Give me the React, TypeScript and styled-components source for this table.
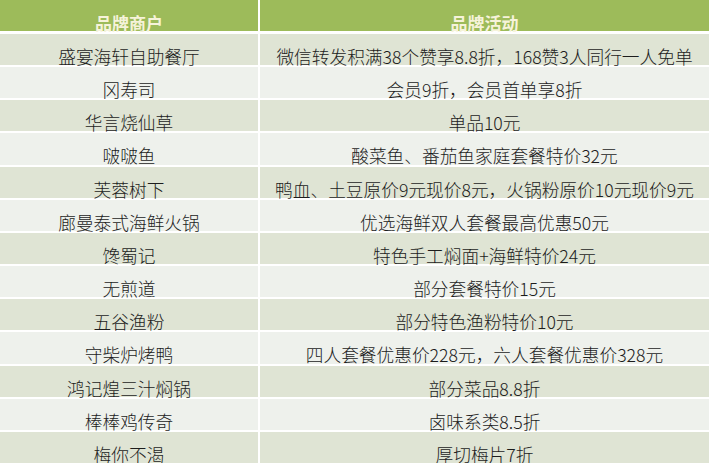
import React from 'react'
import styled, { createGlobalStyle } from 'styled-components'

const GlobalStyle = createGlobalStyle`
  html, body {
    margin: 0;
    padding: 0;
    background: #ffffff;
  }
  body {
    font-family: "Noto Sans CJK SC", "Noto Sans", sans-serif;
  }
`

// 表格外框
const Table = styled.div`
  width: 709px;
  display: flex;
  flex-direction: column;
  gap: 2px;
  background: #ffffff;
`

// 表头
const HeadRow = styled.div`
  display: grid;
  grid-template-columns: 258px 449px;
  column-gap: 2px;
  height: 31px;
  margin-bottom: 1px;
`

const HeadCell = styled.div`
  background: #9dbb5a;
  color: #f6f3da;
  font-size: 17px;
  font-weight: 700;
  line-height: 17px;
  padding-top: 14px;
  box-sizing: border-box;
  text-align: center;
`

// 数据行
const Row = styled.div<{ $odd: boolean }>`
  display: grid;
  grid-template-columns: 258px 449px;
  column-gap: 2px;
  height: 31.17px;

  & > div {
    background: ${p => (p.$odd ? '#dfe4d4' : '#eef1ec')};
  }
`

const Cell = styled.div`
  color: #1c1c1c;
  font-size: 17.7px;
  font-weight: 300;
  line-height: 17px;
  padding-top: 14px;
  box-sizing: border-box;
  text-align: center;
  white-space: nowrap;
`

const rows: [string, string][] = [
  ['盛宴海轩自助餐厅', '微信转发积满38个赞享8.8折，168赞3人同行一人免单'],
  ['冈寿司', '会员9折，会员首单享8折'],
  ['华言烧仙草', '单品10元'],
  ['啵啵鱼', '酸菜鱼、番茄鱼家庭套餐特价32元'],
  ['芙蓉树下', '鸭血、土豆原价9元现价8元，火锅粉原价10元现价9元'],
  ['廊曼泰式海鲜火锅', '优选海鲜双人套餐最高优惠50元'],
  ['馋蜀记', '特色手工焖面+海鲜特价24元'],
  ['无煎道', '部分套餐特价15元'],
  ['五谷渔粉', '部分特色渔粉特价10元'],
  ['守柴炉烤鸭', '四人套餐优惠价228元，六人套餐优惠价328元'],
  ['鸿记煌三汁焖锅', '部分菜品8.8折'],
  ['棒棒鸡传奇', '卤味系类8.5折'],
  ['梅你不渴', '厚切梅片7折'],
]

const App = () => {
  return (
    <>
      <GlobalStyle />
      <Table>
        <HeadRow>
          <HeadCell>品牌商户</HeadCell>
          <HeadCell>品牌活动</HeadCell>
        </HeadRow>
        {rows.map(([shop, deal], i) => (
          <Row key={shop} $odd={i % 2 === 0}>
            <Cell>{shop}</Cell>
            <Cell>{deal}</Cell>
          </Row>
        ))}
      </Table>
    </>
  )
}

export default App
